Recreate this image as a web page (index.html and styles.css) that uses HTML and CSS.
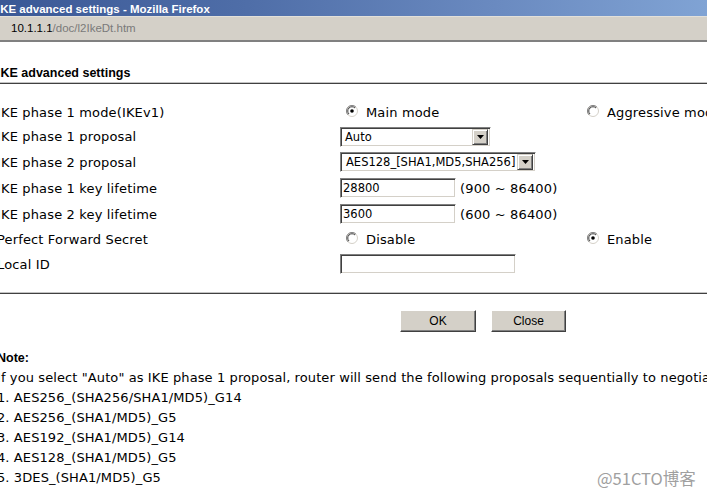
FILE: index.html
```html
<!DOCTYPE html>
<html>
<head>
<meta charset="utf-8">
<title>IKE advanced settings</title>
<link rel="stylesheet" href="styles.css">
</head>
<body>
<div class="titlebar"><span class="title">IKE advanced settings - Mozilla Firefox</span></div>
<div class="addrbar"><span class="host">10.1.1.1</span><span class="path">/doc/l2IkeDt.htm</span></div>
<main class="content">
  <h1 class="heading">IKE advanced settings</h1>
  <div class="rule"></div>
  <div class="form">
    <div class="label">IKE phase 1 mode(IKEv1)</div>
    <div class="cell"><span class="radio"><svg width="12" height="12" viewBox="0 0 12 12"><circle cx="6" cy="6" r="5.5" fill="#fff" stroke="#d4d0c8"/><path d="M2.1 9.9A5.5 5.5 0 0 1 9.9 2.1" fill="none" stroke="#808080"/><path d="M3 9A4.2 4.2 0 0 1 9 3" fill="none" stroke="#404040"/><circle cx="6" cy="6" r="1.8" fill="#000"/></svg></span><span class="rtext">Main mode</span></div>
    <div class="cell c3"><span class="radio"><svg width="12" height="12" viewBox="0 0 12 12"><circle cx="6" cy="6" r="5.5" fill="#fff" stroke="#d4d0c8"/><path d="M2.1 9.9A5.5 5.5 0 0 1 9.9 2.1" fill="none" stroke="#808080"/><path d="M3 9A4.2 4.2 0 0 1 9 3" fill="none" stroke="#404040"/></svg></span><span class="rtext">Aggressive mode</span></div>

    <div class="label">IKE phase 1 proposal</div>
    <div class="cell wide"><div class="select s1"><span class="sval">Auto</span><span class="sbtn"><svg width="7" height="4" viewBox="0 0 7 4"><path d="M0 0H7L3.5 4Z" fill="#000"/></svg></span></div></div>

    <div class="label">IKE phase 2 proposal</div>
    <div class="cell wide"><div class="select s2"><span class="sval">AES128_[SHA1,MD5,SHA256]</span><span class="sbtn"><svg width="7" height="4" viewBox="0 0 7 4"><path d="M0 0H7L3.5 4Z" fill="#000"/></svg></span></div></div>

    <div class="label">IKE phase 1 key lifetime</div>
    <div class="cell wide"><div class="input i1">28800</div><span class="range">(900 ~ 86400)</span></div>

    <div class="label">IKE phase 2 key lifetime</div>
    <div class="cell wide"><div class="input i1">3600</div><span class="range">(600 ~ 86400)</span></div>

    <div class="label">Perfect Forward Secret</div>
    <div class="cell"><span class="radio"><svg width="12" height="12" viewBox="0 0 12 12"><circle cx="6" cy="6" r="5.5" fill="#fff" stroke="#d4d0c8"/><path d="M2.1 9.9A5.5 5.5 0 0 1 9.9 2.1" fill="none" stroke="#808080"/><path d="M3 9A4.2 4.2 0 0 1 9 3" fill="none" stroke="#404040"/></svg></span><span class="rtext">Disable</span></div>
    <div class="cell c3"><span class="radio"><svg width="12" height="12" viewBox="0 0 12 12"><circle cx="6" cy="6" r="5.5" fill="#fff" stroke="#d4d0c8"/><path d="M2.1 9.9A5.5 5.5 0 0 1 9.9 2.1" fill="none" stroke="#808080"/><path d="M3 9A4.2 4.2 0 0 1 9 3" fill="none" stroke="#404040"/><circle cx="6" cy="6" r="1.8" fill="#000"/></svg></span><span class="rtext">Enable</span></div>

    <div class="label">Local ID</div>
    <div class="cell wide"><div class="input i2"></div></div>
  </div>
  <div class="rule rule2"></div>
  <div class="buttons">
    <span class="btn ok">OK</span>
    <span class="btn close">Close</span>
  </div>
  <div class="note">
    <div class="note-title">Note:</div>
    <div class="line">If you select "Auto" as IKE phase 1 proposal, router will send the following proposals sequentially to negotiate.</div>
    <div class="line">1. AES256_(SHA256/SHA1/MD5)_G14</div>
    <div class="line">2. AES256_(SHA1/MD5)_G5</div>
    <div class="line">3. AES192_(SHA1/MD5)_G14</div>
    <div class="line">4. AES128_(SHA1/MD5)_G5</div>
    <div class="line">5. 3DES_(SHA1/MD5)_G5</div>
  </div>
</main>
<div class="watermark">@51CTO博客</div>
</body>
</html>
```
FILE: styles.css
```css
html, body {
  margin: 0;
  padding: 0;
  background: #fff;
  width: 707px;
  height: 493px;
  overflow: hidden;
  position: relative;
  font-family: "DejaVu Sans", sans-serif;
  color: #000;
}

.titlebar {
  height: 16px;
  line-height: 16px;
  background: linear-gradient(to right, #3a5896 0%, #4f6ea8 35%, #6a8ac0 70%, #80a3d4 100%);
  border-bottom: 1px solid #e2e0da;
  white-space: nowrap;
  overflow: hidden;
}
.title {
  display: inline-block;
  margin-left: -3px;
  font-family: "Liberation Sans", Arial, sans-serif;
  font-weight: bold;
  font-size: 11.5px;
  color: #fff;
}

.addrbar {
  height: 23px;
  line-height: 23px;
  background: #d4d0c8;
  border-bottom: 2px solid #808080;
  padding-left: 11px;
  font-family: "Liberation Sans", Arial, sans-serif;
  font-size: 11.5px;
  white-space: nowrap;
}
.host { color: #000; }
.path { color: #7a7a7a; }

.content {
  margin-left: -3px;
  white-space: nowrap;
}

.heading {
  margin: 0;
  padding-top: 23px;
  line-height: 16px;
  font-family: "Liberation Sans", Arial, sans-serif;
  font-weight: bold;
  font-size: 12.5px;
}

.rule {
  margin-top: 1px;
  height: 0;
  border-top: 1px solid #c4c4c4;
  border-bottom: 1px solid #404040;
  width: 720px;
}
.rule2 { margin-top: 15px; }

.form {
  margin-top: 16px;
  display: grid;
  grid-template-columns: 343px 247px auto;
  grid-template-rows: 24px 25px 26px 26px 26px 24px 26px;
  font-size: 13px;
  letter-spacing: 0.15px;
}
.label {
  display: flex;
  align-items: center;
}
.cell {
  display: flex;
  align-items: center;
}
.cell.wide { grid-column: span 2; }

.radio {
  display: inline-flex;
  width: 12px;
  height: 12px;
  margin-left: 6px;
  margin-top: -3px;
}
.c3 .radio { margin-left: 0; }
.rtext { margin-left: 8px; }

.select {
  box-sizing: border-box;
  height: 20px;
  display: flex;
  align-items: center;
  justify-content: space-between;
  border: 1px solid;
  border-color: #808080 #fff #fff #808080;
  box-shadow: inset 1px 1px 0 #404040, inset -1px -1px 0 #d4d0c8;
  background: #fff;
  padding: 2px 2px 2px 4px;
  font-size: 11.5px;
  letter-spacing: 0;
}
.s1 { width: 151px; }
.s2 { width: 196px; padding-left: 5px; }
.sval { line-height: 16px; }
.sbtn {
  box-sizing: border-box;
  width: 16px;
  height: 16px;
  background: #d4d0c8;
  border: 1px solid;
  border-color: #d4d0c8 #404040 #404040 #d4d0c8;
  box-shadow: inset 1px 1px 0 #fff, inset -1px -1px 0 #808080;
  display: flex;
  align-items: center;
  justify-content: center;
}

.input {
  box-sizing: border-box;
  height: 20px;
  line-height: 16px;
  border: 1px solid;
  border-color: #808080 #fff #fff #808080;
  box-shadow: inset 1px 1px 0 #404040, inset -1px -1px 0 #d4d0c8;
  background: #fff;
  padding: 1px 2px;
  font-size: 11.5px;
  letter-spacing: 0;
}
.i1 { width: 116px; }
.i2 { width: 176px; }
.range { margin-left: 4px; }

.buttons {
  margin-top: 16px;
  padding-left: 403px;
  display: flex;
  gap: 15px;
}
.btn {
  box-sizing: border-box;
  height: 22px;
  display: flex;
  align-items: center;
  justify-content: center;
  background: #d4d0c8;
  border: 1px solid;
  border-color: #fff #404040 #404040 #fff;
  box-shadow: inset -1px -1px 0 #808080;
  font-family: "Liberation Sans", Arial, sans-serif;
  font-size: 12px;
}
.ok { width: 76px; }
.close { width: 75px; }

.note {
  margin-top: 16px;
  font-size: 13px;
  letter-spacing: 0.1px;
}
.note-title {
  line-height: 20px;
  font-family: "Liberation Sans", Arial, sans-serif;
  font-weight: bold;
  font-size: 12.5px;
  letter-spacing: 0;
}
.line { line-height: 20px; }

.watermark {
  position: absolute;
  left: 597px;
  top: 466px;
  font-family: "Noto Sans CJK SC", sans-serif;
  font-size: 16.5px;
  color: #a0a0a0;
  line-height: 24px;
  white-space: nowrap;
}
```
